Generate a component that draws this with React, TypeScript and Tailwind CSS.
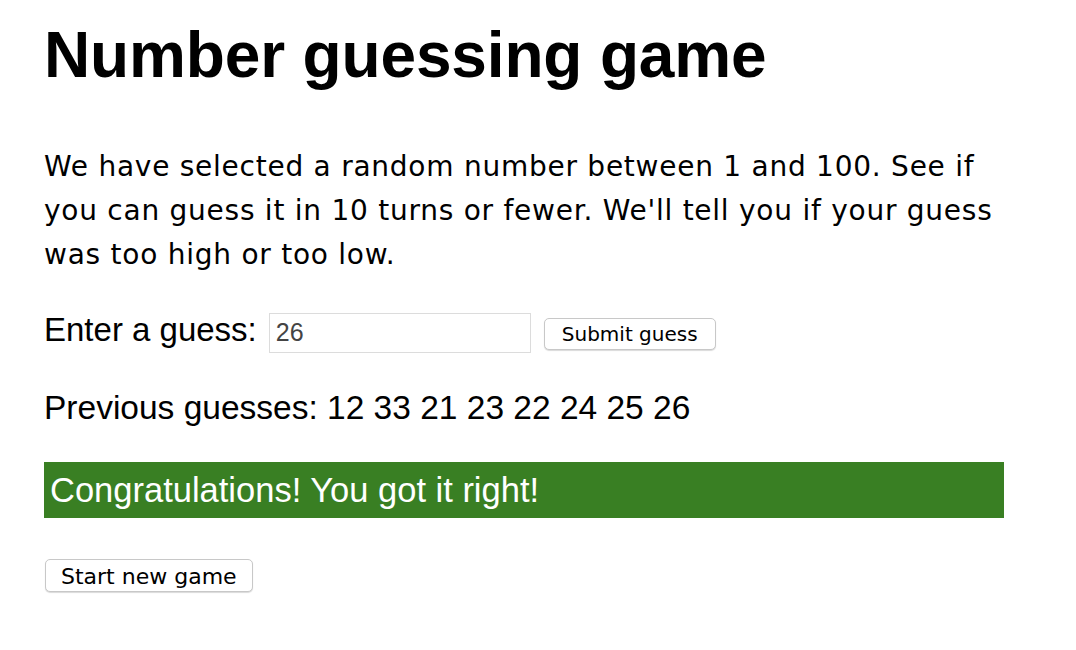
import { useState } from 'react';

const guesses = [12, 33, 21, 23, 22, 24, 25, 26];

const App = () => {
  const [value, setValue] = useState('26');

  return (
    <div className="min-h-screen bg-white text-black">
      <div className="w-[960px] ml-[44px] font-['Liberation_Sans',Arial,sans-serif]">
        {/* Заголовок */}
        <h1 className="mt-[18px] text-[64px] leading-[74px] font-bold tracking-[-0.15px]">Number guessing game</h1>

        <p className="mt-[53px] text-[28px] leading-[44px] tracking-[0.75px] font-['DejaVu_Sans',Verdana,sans-serif]">
          We have selected a random number between 1 and 100. See if you can guess it in 10 turns or fewer. We'll tell you if
          your guess was too high or too low.
        </p>

        {/* Поле ввода */}
        <div className="mt-[33px] flex items-baseline">
          <label htmlFor="guess" className="text-[33px] leading-[40px]">Enter a guess:</label>
          <input
            id="guess"
            type="text"
            value={value}
            onChange={e => setValue(e.target.value)}
            className="ml-[12px] w-[262px] h-[40px] border border-[#dcdcdc] px-[6px] text-[25px] text-[#444] outline-none font-['Liberation_Sans',Arial,sans-serif]"
          />
          <button className="ml-[13px] h-[32px] px-[17px] rounded-[5px] border border-[#c8c8c8] bg-white shadow-[0_1px_1px_rgba(0,0,0,0.15)] text-[20px] font-['DejaVu_Sans',sans-serif]">
            Submit guess
          </button>
        </div>

        <p className="mt-[35px] text-[33.5px] leading-[40px]">Previous guesses: {guesses.join(' ')}</p>

        {/* Результат */}
        <div className="mt-[34px] bg-[#397f23] text-white pl-[6px] py-[6px] text-[34.5px] leading-[44px]">
          Congratulations! You got it right!
        </div>

        <button className="mt-[41px] ml-[1px] h-[33px] px-[15px] rounded-[5px] border border-[#c8c8c8] bg-white shadow-[0_1px_1px_rgba(0,0,0,0.15)] text-[22px] font-['DejaVu_Sans',sans-serif]">
          Start new game
        </button>
      </div>
    </div>
  );
};

export default App;
